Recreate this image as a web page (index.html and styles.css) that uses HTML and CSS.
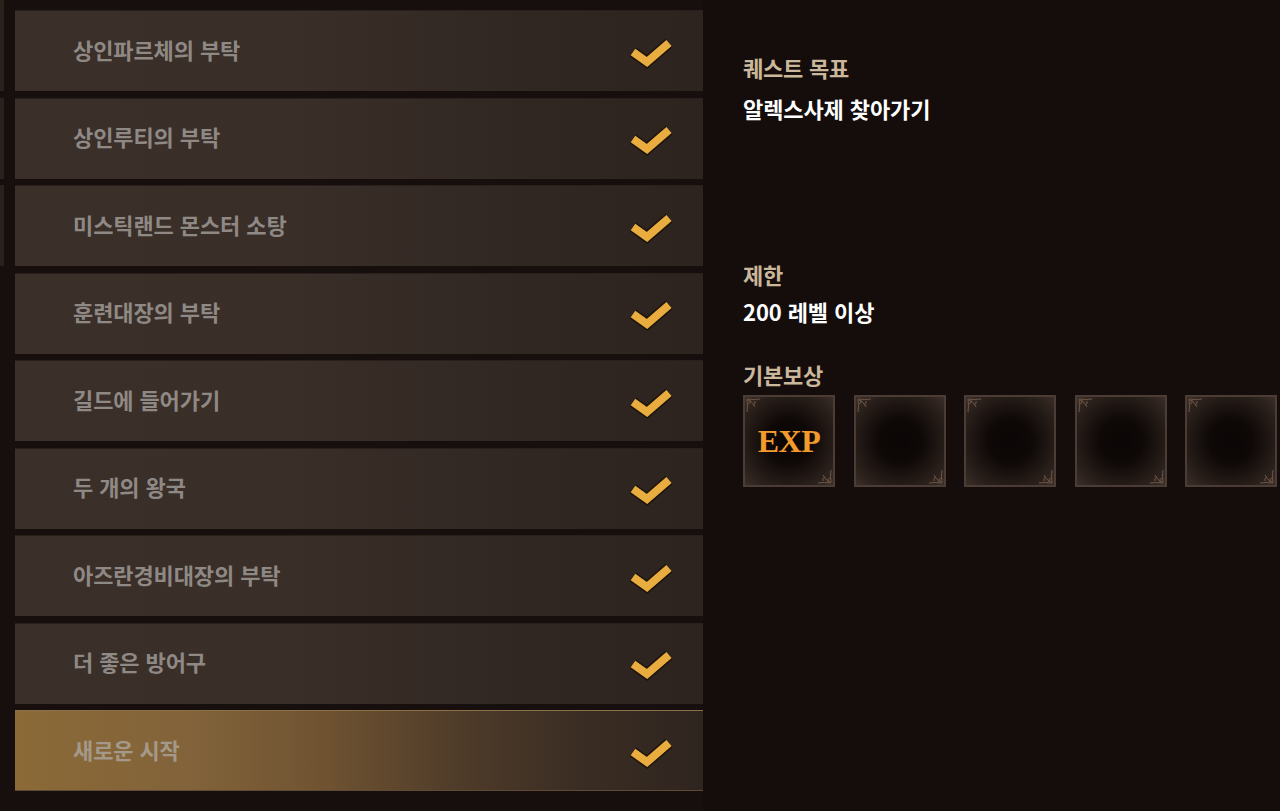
FILE: index.html
```html
<!DOCTYPE html>
<html lang="ko">
<head>
<meta charset="utf-8">
<link rel="stylesheet" href="styles.css">
</head>
<body>
<div class="page">
  <div class="list">
    <div class="stub on"></div><div class="card"><span class="name">상인파르체의 부탁</span><svg class="check" viewBox="0 0 48 36"><polyline points="7,19 21,29 43,10" class="o"/><polyline points="7,19 21,29 43,10" class="i"/></svg></div>
    <div class="stub on"></div><div class="card"><span class="name">상인루티의 부탁</span><svg class="check" viewBox="0 0 48 36"><polyline points="7,19 21,29 43,10" class="o"/><polyline points="7,19 21,29 43,10" class="i"/></svg></div>
    <div class="stub on"></div><div class="card"><span class="name">미스틱랜드 몬스터 소탕</span><svg class="check" viewBox="0 0 48 36"><polyline points="7,19 21,29 43,10" class="o"/><polyline points="7,19 21,29 43,10" class="i"/></svg></div>
    <div class="stub"></div><div class="card"><span class="name">훈련대장의 부탁</span><svg class="check" viewBox="0 0 48 36"><polyline points="7,19 21,29 43,10" class="o"/><polyline points="7,19 21,29 43,10" class="i"/></svg></div>
    <div class="stub"></div><div class="card"><span class="name">길드에 들어가기</span><svg class="check" viewBox="0 0 48 36"><polyline points="7,19 21,29 43,10" class="o"/><polyline points="7,19 21,29 43,10" class="i"/></svg></div>
    <div class="stub"></div><div class="card"><span class="name">두 개의 왕국</span><svg class="check" viewBox="0 0 48 36"><polyline points="7,19 21,29 43,10" class="o"/><polyline points="7,19 21,29 43,10" class="i"/></svg></div>
    <div class="stub"></div><div class="card"><span class="name">아즈란경비대장의 부탁</span><svg class="check" viewBox="0 0 48 36"><polyline points="7,19 21,29 43,10" class="o"/><polyline points="7,19 21,29 43,10" class="i"/></svg></div>
    <div class="stub"></div><div class="card"><span class="name">더 좋은 방어구</span><svg class="check" viewBox="0 0 48 36"><polyline points="7,19 21,29 43,10" class="o"/><polyline points="7,19 21,29 43,10" class="i"/></svg></div>
    <div class="stub"></div><div class="card active"><span class="name">새로운 시작</span><svg class="check" viewBox="0 0 48 36"><polyline points="7,19 21,29 43,10" class="o"/><polyline points="7,19 21,29 43,10" class="i"/></svg></div>
  </div>
  <div class="detail">
    <div class="label">퀘스트 목표</div>
    <div class="value goal">알렉스사제 찾아가기</div>
    <div class="label">제한</div>
    <div class="value limit">200 레벨 이상</div>
    <div class="label reward-label">기본보상</div>
    <div class="rewards">
      <div class="slot"><svg class="orn tl" viewBox="0 0 16 16"><path d="M1 1 Q8 2 14 1 M1 1 Q2 8 1 14 M2 2 Q7 4 9 9 M4 2 Q5 5 2 6 M9 3 Q10 6 7 7"/></svg><svg class="orn br" viewBox="0 0 16 16"><path d="M15 15 Q8 14 2 15 M15 15 Q14 8 15 2 M14 14 Q9 12 7 7 M12 14 Q11 11 14 10 M7 13 Q6 10 9 9"/></svg><span class="exp">EXP</span></div>
      <div class="slot"><svg class="orn tl" viewBox="0 0 16 16"><path d="M1 1 Q8 2 14 1 M1 1 Q2 8 1 14 M2 2 Q7 4 9 9 M4 2 Q5 5 2 6 M9 3 Q10 6 7 7"/></svg><svg class="orn br" viewBox="0 0 16 16"><path d="M15 15 Q8 14 2 15 M15 15 Q14 8 15 2 M14 14 Q9 12 7 7 M12 14 Q11 11 14 10 M7 13 Q6 10 9 9"/></svg></div>
      <div class="slot"><svg class="orn tl" viewBox="0 0 16 16"><path d="M1 1 Q8 2 14 1 M1 1 Q2 8 1 14 M2 2 Q7 4 9 9 M4 2 Q5 5 2 6 M9 3 Q10 6 7 7"/></svg><svg class="orn br" viewBox="0 0 16 16"><path d="M15 15 Q8 14 2 15 M15 15 Q14 8 15 2 M14 14 Q9 12 7 7 M12 14 Q11 11 14 10 M7 13 Q6 10 9 9"/></svg></div>
      <div class="slot"><svg class="orn tl" viewBox="0 0 16 16"><path d="M1 1 Q8 2 14 1 M1 1 Q2 8 1 14 M2 2 Q7 4 9 9 M4 2 Q5 5 2 6 M9 3 Q10 6 7 7"/></svg><svg class="orn br" viewBox="0 0 16 16"><path d="M15 15 Q8 14 2 15 M15 15 Q14 8 15 2 M14 14 Q9 12 7 7 M12 14 Q11 11 14 10 M7 13 Q6 10 9 9"/></svg></div>
      <div class="slot"><svg class="orn tl" viewBox="0 0 16 16"><path d="M1 1 Q8 2 14 1 M1 1 Q2 8 1 14 M2 2 Q7 4 9 9 M4 2 Q5 5 2 6 M9 3 Q10 6 7 7"/></svg><svg class="orn br" viewBox="0 0 16 16"><path d="M15 15 Q8 14 2 15 M15 15 Q14 8 15 2 M14 14 Q9 12 7 7 M12 14 Q11 11 14 10 M7 13 Q6 10 9 9"/></svg></div>
    </div>
  </div>
</div>
</body>
</html>
```

FILE: styles.css
```css
html, body {
  margin: 0;
  padding: 0;
  background: #150e0c;
  width: 1280px;
  height: 811px;
  overflow: hidden;
  font-family: "Noto Sans CJK KR", "Noto Sans", sans-serif;
}
.page {
  display: flex;
  height: 811px;
}
.list {
  display: grid;
  grid-template-columns: 4px 688px;
  grid-auto-rows: 81px;
  column-gap: 11px;
  row-gap: 6.5px;
  padding-top: 10px;
  background: #170f0d;
  width: 703px;
  flex: none;
}
.stub {
  margin-top: -10px;
  margin-bottom: -6px;
}
.stub.on {
  background: #2a211d;
  margin-top: 0;
  margin-bottom: 0;
}
.stub.on:first-child {
  margin-top: -10px;
}
.card {
  display: flex;
  align-items: center;
  justify-content: space-between;
  padding: 0 29px 0 58px;
  background: linear-gradient(90deg, #3b2f29 0%, #392e28 40%, #312722 75%, #2d241f 100%);
  box-shadow: inset 0 1px 0 #2a201b;
}
.card .name {
  color: #8f8985;
  font-size: 22px;
  font-weight: 700;
  letter-spacing: -0.1px;
  margin-top: -4px;
}
.card.active {
  background: linear-gradient(90deg, #8b6a37 0%, #82633a 25%, #6f5331 45%, #4e3b29 65%, #3a2d23 82%, #2f251f 100%);
  box-shadow: inset 0 1px 0 #8c7048, inset 0 -1px 0 #5e4a35;
}
.card.active .name {
  color: #a49988;
}
.check {
  width: 48px;
  height: 36px;
}
.check polyline {
  fill: none;
  stroke-linejoin: miter;
  stroke-linecap: butt;
}
.check .o {
  stroke: #1e140b;
  stroke-width: 11;
}
.check .i {
  stroke: #e9ad3f;
  stroke-width: 8;
}
.detail {
  padding: 53px 0 0 40px;
  flex: 1;
  background: #140d0b;
}
.label {
  color: #cbb79c;
  font-size: 22px;
  font-weight: 700;
  line-height: 28px;
  letter-spacing: -0.2px;
}
.value {
  color: #ffffff;
  font-size: 22px;
  font-weight: 700;
  line-height: 28px;
  margin-top: 13px;
  letter-spacing: -0.1px;
}
.goal {
  margin-bottom: 138px;
}
.limit {
  margin-top: 9px;
  margin-bottom: 35px;
}
.rewards {
  display: flex;
  gap: 18.5px;
  margin-top: 7px;
}
.slot {
  position: relative;
  flex: none;
  width: 88px;
  height: 88px;
  border: 2px solid #4b3d35;
  background: radial-gradient(circle at 50% 50%, #0b0605 0%, #0e0807 35%, #2a201b 78%, #3a2e28 100%);
  display: flex;
  align-items: center;
  justify-content: center;
}
.orn {
  position: absolute;
  width: 16px;
  height: 16px;
}
.orn path {
  fill: none;
  stroke: #6f5646;
  stroke-width: 1;
}
.orn.tl { top: 1px; left: 1px; }
.orn.br { bottom: 1px; right: 1px; }
.exp {
  font-family: "Liberation Serif", "DejaVu Serif", serif;
  font-weight: 700;
  font-size: 32px;
  color: #f29a2c;
  letter-spacing: -0.5px;
}
```
